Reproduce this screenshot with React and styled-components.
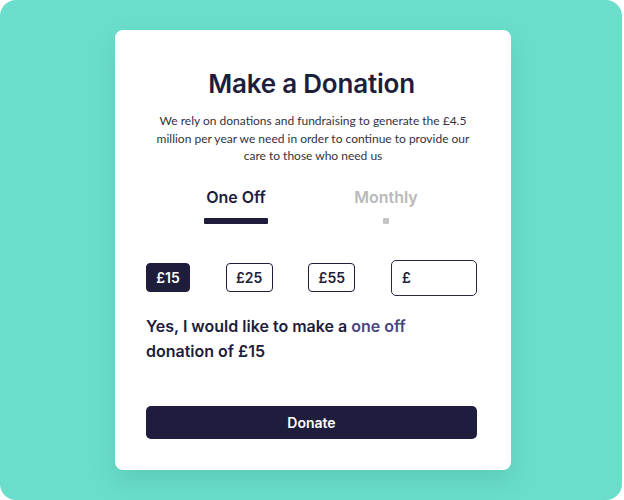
import React, { useState } from 'react';
import styled, { createGlobalStyle } from 'styled-components';

const GlobalStyle = createGlobalStyle`
  body {
    margin: 0;
    background: #ffffff;
    font-family: 'Inter', 'Lato', sans-serif;
  }
  * { box-sizing: border-box; }
`;

const amounts = [15, 25, 55];

const App = () => {
  const [tab, setTab] = useState('one');
  const [amount, setAmount] = useState(15);

  return (
    <>
      <GlobalStyle />
      <Backdrop>
        <Card>
          <Title>Make a Donation</Title>
          <Intro>
            We rely on donations and fundraising to generate the £4.5 million per year we need in order
            to continue to provide our care to those who need us
          </Intro>

          <Tabs>
            <Tab active={tab === 'one'} onClick={() => setTab('one')}>
              One Off
              <Indicator active={tab === 'one'} />
            </Tab>
            <Tab active={tab === 'monthly'} onClick={() => setTab('monthly')}>
              Monthly
              <Indicator active={tab === 'monthly'} />
            </Tab>
          </Tabs>

          <Amounts>
            {amounts.map((a) => (
              <AmountButton key={a} selected={amount === a} onClick={() => setAmount(a)}>
                £{a}
              </AmountButton>
            ))}
            <CustomAmount>
              <span>£</span>
              <input type='text' />
            </CustomAmount>
          </Amounts>

          <Summary>
            Yes, I would like to make a <Highlight>{tab === 'one' ? 'one off' : 'monthly'}</Highlight>{' '}
            donation of £{amount}
          </Summary>

          <DonateButton>Donate</DonateButton>
        </Card>
      </Backdrop>
    </>
  );
};

export default App;

const Backdrop = styled.div`
  width: 622px;
  height: 500px;
  background: #6adecb;
  border-radius: 16px;
  padding-top: 30px;
  padding-left: 4px;
  display: flex;
  justify-content: center;
  align-items: flex-start;
`;

const Card = styled.div`
  width: 396px;
  height: 440px;
  background: #ffffff;
  border-radius: 8px;
  box-shadow: 0 12px 24px rgba(40, 120, 105, 0.18);
  padding: 38px 34px 0 31px;
  display: flex;
  flex-direction: column;
`;

const Title = styled.h1`
  margin: 0;
  text-align: center;
  font-size: 26px;
  font-weight: 600;
  letter-spacing: -0.2px;
  color: #1e1d3c;
  line-height: 32px;
`;

const Intro = styled.p`
  margin: 12px 0 0;
  padding: 0 4px 0 7px;
  text-align: center;
  font-family: 'Lato', sans-serif;
  font-size: 12px;
  line-height: 17.5px;
  color: #333340;
`;

const Tabs = styled.div`
  display: flex;
  justify-content: space-between;
  margin-top: 22px;
  padding: 0 59px 0 58px;
`;

const Tab = styled.div`
  display: flex;
  flex-direction: column;
  align-items: center;
  font-size: 16px;
  font-weight: 600;
  line-height: 20px;
  width: 64px;
  white-space: nowrap;
  cursor: pointer;
  color: ${(p) => (p.active ? '#1e1d3c' : '#b9b9b9')};
`;

const Indicator = styled.div`
  margin-top: 11px;
  height: 6px;
  width: ${(p) => (p.active ? '64px' : '6px')};
  border-radius: 1px;
  background: ${(p) => (p.active ? '#1e1d3c' : '#c4c4c4')};
`;

const Amounts = styled.div`
  display: flex;
  align-items: center;
  justify-content: space-between;
  margin-top: 36px;
`;

const AmountButton = styled.button`
  height: 29px;
  width: ${(p) => (p.selected ? '44px' : '47px')};
  padding: 0;
  border-radius: 4px;
  font-family: inherit;
  font-size: 14px;
  font-weight: 600;
  cursor: pointer;
  border: 1.5px solid #1e1d3c;
  background: ${(p) => (p.selected ? '#1e1d3c' : '#ffffff')};
  color: ${(p) => (p.selected ? '#ffffff' : '#1e1d3c')};
`;

const CustomAmount = styled.label`
  width: 86px;
  height: 36px;
  border: 1.5px solid #2a2940;
  border-radius: 5px;
  display: flex;
  align-items: center;
  padding-left: 10px;
  gap: 4px;
  font-size: 14px;
  font-weight: 600;
  color: #1e1d3c;

  input {
    border: none;
    outline: none;
    width: 50px;
    font: inherit;
    background: transparent;
  }
`;

const Summary = styled.p`
  margin: 18px 0 0;
  font-size: 16px;
  font-weight: 600;
  line-height: 25px;
  color: #1e1d3c;
  padding-right: 60px;
`;

const Highlight = styled.span`
  color: #4a4582;
`;

const DonateButton = styled.button`
  margin-top: 42px;
  height: 33px;
  width: 100%;
  border: none;
  border-radius: 5px;
  background: #1f1d3d;
  color: #ffffff;
  font-family: inherit;
  font-size: 14px;
  font-weight: 600;
  cursor: pointer;
`;
